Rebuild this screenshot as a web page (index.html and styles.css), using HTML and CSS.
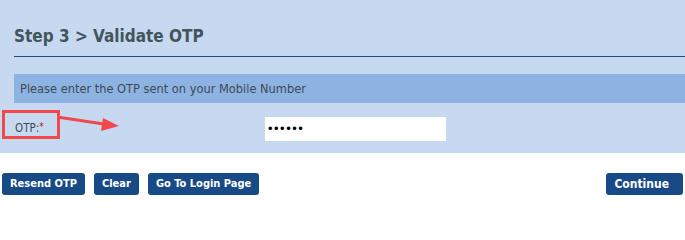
FILE: index.html
```html
<!DOCTYPE html>
<html>
<head>
<meta charset="utf-8">
<link rel="stylesheet" href="styles.css">
</head>
<body>
<div class="panel">
  <h2 class="title">Step 3 &gt; Validate OTP</h2>
  <div class="info">Please enter the OTP sent on your Mobile Number</div>
  <div class="row">
    <label class="label">OTP:<span class="req">*</span></label>
    <input class="otp" type="password" value="123456">
    <div class="mark-box"></div>
    <svg class="arrow" width="70" height="20" viewBox="0 0 70 20">
      <line x1="0" y1="4" x2="50" y2="11.5" stroke="#f2484b" stroke-width="3"/>
      <polygon points="46,5 62,13 44,18" fill="#f2484b"/>
    </svg>
  </div>
</div>
<div class="actions">
  <div class="left">
    <button class="btn">Resend OTP</button>
    <button class="btn">Clear</button>
    <button class="btn">Go To Login Page</button>
  </div>
  <button class="btn btn-continue">Continue</button>
</div>
</body>
</html>
```
FILE: styles.css
```css
* { box-sizing: border-box; }
body {
  margin: 0;
  background: #ffffff;
  font-family: "DejaVu Sans Condensed", "DejaVu Sans", sans-serif;
}
.panel {
  background: #c6d9f1;
  height: 153px;
  padding-left: 14px;
  padding-top: 1px;
}
.title {
  margin: 0;
  height: 56px;
  padding-top: 24px;
  font-size: 17px;
  font-weight: bold;
  color: #44545c;
  border-bottom: 1px solid #1f4b84;
  line-height: 22px;
}
.info {
  margin-top: 17px;
  height: 29px;
  background: #8db3e2;
  color: #3d4a52;
  font-size: 12.7px;
  line-height: 29px;
  padding-left: 6px;
}
.row {
  position: relative;
  display: flex;
  align-items: center;
  height: 49px;
}
.label {
  width: 251px;
  font-size: 11.5px;
  color: #3d4a52;
  padding-left: 1px;
  padding-top: 1px;
}
.req { color: #e0001a; font-size: 10px; vertical-align: top; }
.otp {
  width: 181px;
  height: 24px;
  border: none;
  background: #fff;
  padding: 0 3px;
  font-size: 13px;
  letter-spacing: 1.5px;
  margin-top: 2px;
  outline: none;
}
.mark-box {
  position: absolute;
  left: -12px;
  top: 7px;
  width: 58px;
  height: 29px;
  border: 3px solid #f2484b;
}
.arrow {
  position: absolute;
  left: 43px;
  top: 10px;
}
.actions {
  display: flex;
  justify-content: space-between;
  padding: 20px 2px 0 2px;
}
.left { display: flex; gap: 9px; }
.btn {
  height: 22px;
  background: #174a86;
  color: #fff;
  border: none;
  border-radius: 3px;
  font-family: "DejaVu Sans Condensed", "DejaVu Sans", sans-serif;
  font-weight: bold;
  font-size: 11px;
  padding: 0 8px;
  line-height: 22px;
}
.btn-continue {
  font-size: 12px;
  padding: 0 14px 0 8px;
}
```
